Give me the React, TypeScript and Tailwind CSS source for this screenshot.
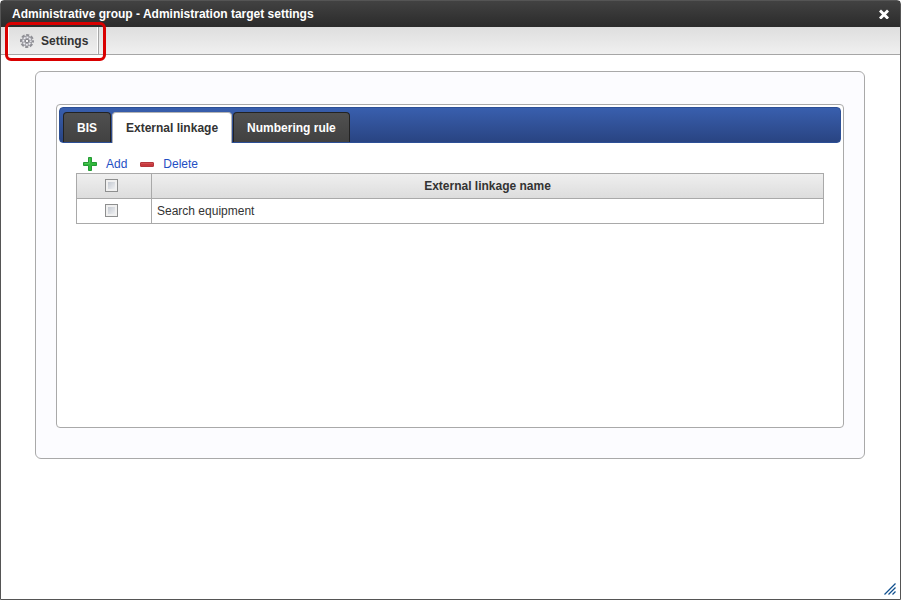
import { useState } from "react";
import type { ReactNode } from "react";

const tabs = ["BIS", "External linkage", "Numbering rule"];
const rows = ["Search equipment"];

const GearIcon = () => (
	<svg width="14" height="14" viewBox="0 0 14 14" fill="none" aria-hidden="true">
		<circle cx="7" cy="7" r="6" stroke="#8f8f95" strokeWidth="2" strokeDasharray="3.1 1.612" strokeDashoffset="1.55" />
		<circle cx="7" cy="7" r="4.9" fill="#a2a2a8" stroke="#94949a" />
		<circle cx="7" cy="7" r="3.7" stroke="#ececf2" strokeWidth="1.6" strokeDasharray="1.9 1.006" strokeDashoffset="0.95" />
		<circle cx="7" cy="7" r="1.7" fill="#f4f4f4" stroke="#88888e" />
	</svg>
);

const CloseIcon = () => (
	<svg width="10" height="10" viewBox="0 0 10 10" aria-hidden="true">
		<path d="M2 2.5l6 6M8 2.5l-6 6" stroke="#fff" strokeWidth="3" strokeLinecap="square" />
	</svg>
);

const AddIcon = () => (
	<svg width="14" height="14" viewBox="0 0 14 14" aria-hidden="true">
		<path d="M5.5.5h3v5h5v3h-5v5h-3v-5h-5v-3h5z" fill="#31b83b" stroke="#249a35" strokeLinejoin="round" />
		<path d="M6.5 1.5v5h-5" stroke="#4cc653" fill="none" />
	</svg>
);

const DeleteIcon = () => (
	<svg width="14" height="14" viewBox="0 0 14 14" aria-hidden="true">
		<rect x="0.5" y="5.5" width="13" height="4" rx="0.5" fill="#c6383d" stroke="#b4363c" />
		<path d="M1 6.5h12" stroke="#d24d50" />
	</svg>
);

const ResizeGrip = () => (
	<svg
		className="absolute right-1 bottom-1"
		width="12"
		height="12"
		viewBox="0 0 12 12"
		aria-hidden="true"
	>
		<path d="M.5 11.5l11-11M4.5 11.5l7-7M8.5 11.5l3-3" stroke="#104f8d" strokeWidth="1.3" />
	</svg>
);

const ActionLink = ({ icon, children }: { icon: ReactNode; children: ReactNode }) => (
	<a href="#" className="flex items-center gap-[9px] text-[#1f4fc4]">
		{icon}
		{children}
	</a>
);

const Checkbox = ({ label }: { label: string }) => (
	<input
		type="checkbox"
		aria-label={label}
		className="block size-[13px] shrink-0 appearance-none border border-[#8e8f8f] bg-linear-to-br from-[#b9bfc9] to-[#fafafa] shadow-[inset_0_0_0_2px_#f0f0f0] checked:bg-[#5b7fb5]"
	/>
);

const App = () => {
	const [active, setActive] = useState("External linkage");

	return (
		<div className="relative flex min-h-screen flex-col rounded-t-sm border border-[#555] bg-white font-['Liberation_Sans',Arial,sans-serif] text-xs text-[#333]">
			<header className="flex h-[26px] items-center justify-between bg-linear-to-b from-[#424242] to-[#2b2b2b] px-[11px]">
				<h1 className="font-bold text-white">Administrative group - Administration target settings</h1>
				<button type="button" aria-label="Close">
					<CloseIcon />
				</button>
			</header>

			<div className="flex h-7 border-b border-[#a6a6a6] bg-linear-to-b from-[#dedede] to-[#f0f0f0] pl-[7px]">
				<div className="relative flex">
					<button
						type="button"
						className="flex items-center gap-[7px] border-r border-[#a6a6a6] pr-2.5 pl-3 font-bold shadow-[inset_1px_0_#fff,inset_-1px_0_#fff]"
					>
						<GearIcon />
						Settings
					</button>
					<span className="pointer-events-none absolute -top-[5px] -right-[7px] -bottom-[7px] -left-[3px] rounded-md border-3 border-[#d90000]" />
				</div>
			</div>

			<main className="mt-4 mr-[35px] ml-[34px] rounded-md border border-[#a9a9a9] bg-[#fcfcff] px-5 pt-8 pb-[30px]">
				<section className="min-h-[324px] rounded-sm border border-[#a9a9a9] bg-white p-0.5">
					<div
						role="tablist"
						className="flex h-9 items-end gap-px rounded-sm border border-[#2c4f96] bg-linear-to-b from-[#395fae] to-[#294482] pl-[3px]"
					>
						{tabs.map((tab) => (
							<button
								key={tab}
								type="button"
								role="tab"
								aria-selected={tab === active}
								onClick={() => setActive(tab)}
								className={
									tab === active
										? "-mb-px h-[31px] rounded-t-sm border border-b-0 border-[#b4b4b4] bg-white px-[13px] font-bold text-[#333]"
										: "h-[30px] rounded-t-sm border border-b-0 border-[#222] bg-linear-to-b from-[#505050] to-[#414141] px-[13px] font-bold text-white"
								}
							>
								{tab}
							</button>
						))}
					</div>

					<div role="tabpanel" className="px-[17px] pt-3">
						<div className="flex h-[18px] items-center gap-[13px] pl-[7px]">
							<ActionLink icon={<AddIcon />}>Add</ActionLink>
							<ActionLink icon={<DeleteIcon />}>Delete</ActionLink>
						</div>
						<table className="w-full border-collapse border border-[#a9a9a9]">
							<thead>
								<tr className="h-[25px] bg-linear-to-b from-[#efefef] to-[#dcdcdc]">
									<th className="w-[75px] border border-[#a9a9a9]">
										<div className="flex justify-center pr-[5px] pb-px">
											<Checkbox label="Select all" />
										</div>
									</th>
									<th className="border border-[#a9a9a9] font-bold">External linkage name</th>
								</tr>
							</thead>
							<tbody>
								{rows.map((name) => (
									<tr key={name} className="h-[25px]">
										<td className="border border-[#a9a9a9]">
											<div className="flex justify-center pr-[5px] pb-px">
												<Checkbox label={name} />
											</div>
										</td>
										<td className="border border-[#a9a9a9] px-[5px]">{name}</td>
									</tr>
								))}
							</tbody>
						</table>
					</div>
				</section>
			</main>

			<ResizeGrip />
		</div>
	);
};

export default App;
